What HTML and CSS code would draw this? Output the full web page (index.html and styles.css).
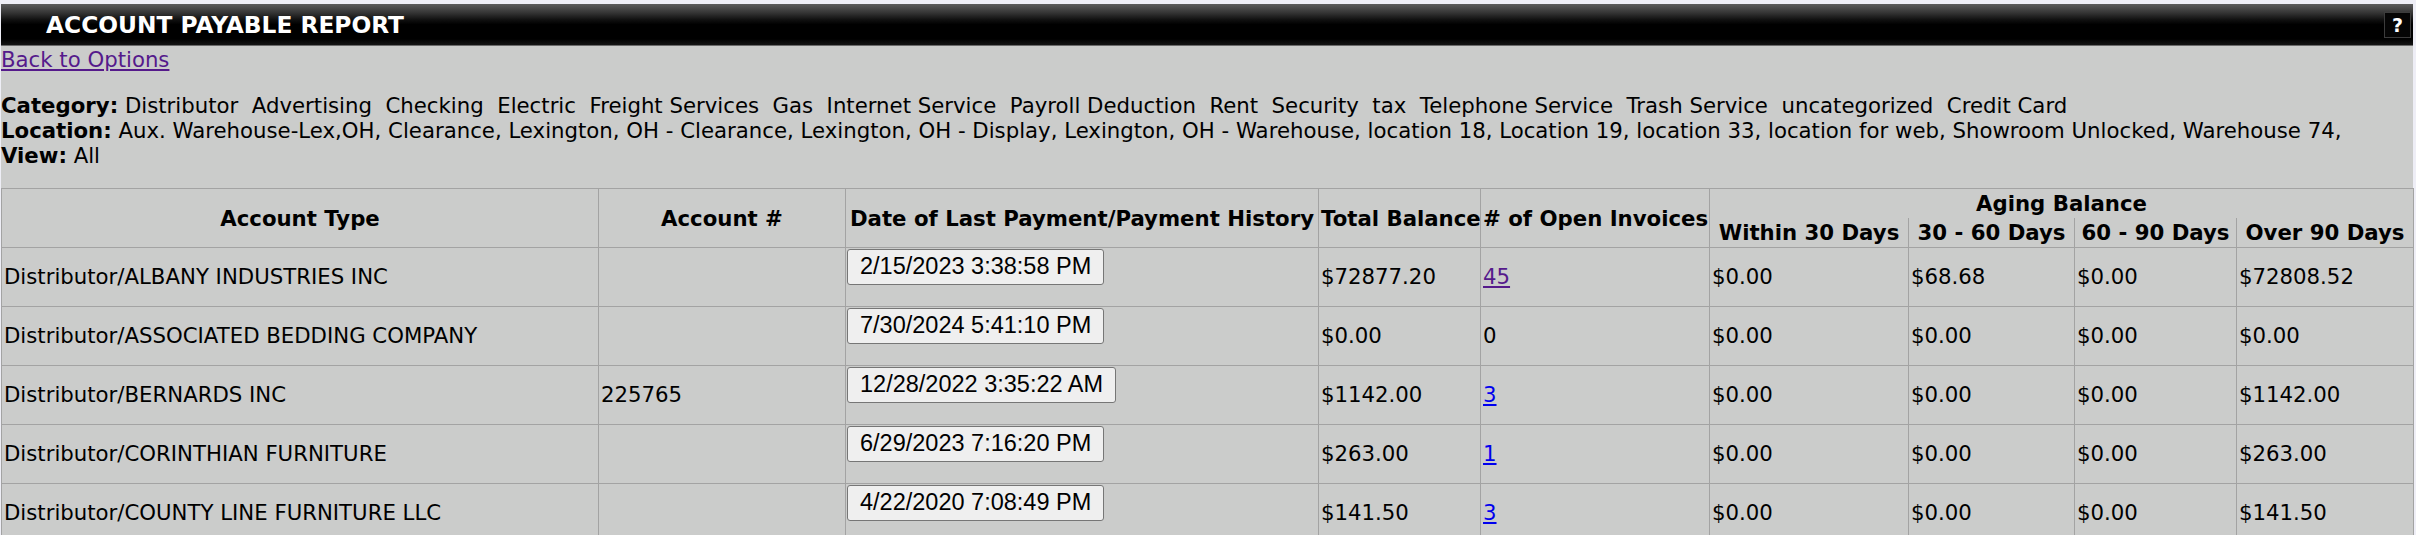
FILE: index.html
```html
<!DOCTYPE html>
<html>
<head>
<meta charset="utf-8">
<title>Account Payable Report</title>
<link rel="stylesheet" href="styles.css">
</head>
<body>
<div class="page">
  <div class="titlebar">
    <span class="title">ACCOUNT PAYABLE REPORT</span>
    <span class="help">?</span>
  </div>
  <a class="back visited" href="#">Back to Options</a>
  <div class="filters">
    <div><b>Category:</b> Distributor&nbsp; Advertising&nbsp; Checking&nbsp; Electric&nbsp; Freight Services&nbsp; Gas&nbsp; Internet Service&nbsp; Payroll Deduction&nbsp; Rent&nbsp; Security&nbsp; tax&nbsp; Telephone Service&nbsp; Trash Service&nbsp; uncategorized&nbsp; Credit Card</div>
    <div><b>Location:</b> Aux. Warehouse-Lex,OH, Clearance, Lexington, OH - Clearance, Lexington, OH - Display, Lexington, OH - Warehouse, location 18, Location 19, location 33, location for web, Showroom Unlocked, Warehouse 74,</div>
    <div><b>View:</b> All</div>
  </div>
  <table class="report">
    <colgroup>
      <col class="c-type"><col class="c-acct"><col class="c-date"><col class="c-total"><col class="c-open">
      <col class="c-w30"><col class="c-3060"><col class="c-6090"><col class="c-90">
    </colgroup>
    <thead>
      <tr>
        <th rowspan="2">Account Type</th>
        <th rowspan="2">Account #</th>
        <th rowspan="2">Date of Last Payment/Payment History</th>
        <th rowspan="2">Total Balance</th>
        <th rowspan="2"># of Open Invoices</th>
        <th colspan="4" class="aging">Aging Balance</th>
      </tr>
      <tr>
        <th class="sub">Within 30 Days</th>
        <th class="sub">30 - 60 Days</th>
        <th class="sub">60 - 90 Days</th>
        <th class="sub">Over 90 Days</th>
      </tr>
    </thead>
    <tbody>
      <tr>
        <td>Distributor/ALBANY INDUSTRIES INC</td>
        <td></td>
        <td class="date"><button class="pay">2/15/2023 3:38:58 PM</button></td>
        <td>$72877.20</td>
        <td><a class="visited" href="#">45</a></td>
        <td>$0.00</td><td>$68.68</td><td>$0.00</td><td>$72808.52</td>
      </tr>
      <tr>
        <td>Distributor/ASSOCIATED BEDDING COMPANY</td>
        <td></td>
        <td class="date"><button class="pay">7/30/2024 5:41:10 PM</button></td>
        <td>$0.00</td>
        <td>0</td>
        <td>$0.00</td><td>$0.00</td><td>$0.00</td><td>$0.00</td>
      </tr>
      <tr>
        <td>Distributor/BERNARDS INC</td>
        <td>225765</td>
        <td class="date"><button class="pay">12/28/2022 3:35:22 AM</button></td>
        <td>$1142.00</td>
        <td><a class="link" href="#">3</a></td>
        <td>$0.00</td><td>$0.00</td><td>$0.00</td><td>$1142.00</td>
      </tr>
      <tr>
        <td>Distributor/CORINTHIAN FURNITURE</td>
        <td></td>
        <td class="date"><button class="pay">6/29/2023 7:16:20 PM</button></td>
        <td>$263.00</td>
        <td><a class="link" href="#">1</a></td>
        <td>$0.00</td><td>$0.00</td><td>$0.00</td><td>$263.00</td>
      </tr>
      <tr>
        <td>Distributor/COUNTY LINE FURNITURE LLC</td>
        <td></td>
        <td class="date"><button class="pay">4/22/2020 7:08:49 PM</button></td>
        <td>$141.50</td>
        <td><a class="link" href="#">3</a></td>
        <td>$0.00</td><td>$0.00</td><td>$0.00</td><td>$141.50</td>
      </tr>
    </tbody>
  </table>
</div>
</body>
</html>
```

FILE: styles.css
```css
html, body {
  margin: 0;
  padding: 0;
  background: #eeeef6;
}
body {
  padding: 4px 3px 0 1px;
  font-family: "DejaVu Sans", Verdana, sans-serif;
  font-size: 21.25px;
  color: #000;
}
.page {
  background: #cbcccb;
  min-height: 531px;
}
.titlebar {
  height: 41px;
  display: flex;
  align-items: center;
  justify-content: space-between;
  background: linear-gradient(to bottom, #5c5c5c 0%, #333 22%, #111 38%, #000 50%, #000 85%, #141414 100%);
  border-bottom: 1px solid #6a6a6a;
  padding: 0 2px 0 45px;
}
.title {
  color: #fff;
  font-weight: bold;
  font-size: 23.3px;
}
.help {
  width: 25px;
  height: 24px;
  border: 1px solid #3c3c3c;
  background: #050505;
  color: #fff;
  font-weight: bold;
  font-size: 19px;
  display: flex;
  align-items: center;
  justify-content: center;
}
.back {
  display: block;
  width: max-content;
  line-height: 25px;
  margin-top: 1px;
}
a.visited { color: #551a8b; }
a.link { color: #0000ee; }
.filters {
  margin-top: 21px;
  line-height: 25px;
}
.report {
  margin-top: 20px;
  border-collapse: collapse;
  table-layout: fixed;
  width: 2412px;
  border: 1px solid #a3a3a3;
}
.c-type { width: 597px; }
.c-acct { width: 247px; }
.c-date { width: 473px; }
.c-total { width: 162px; }
.c-open { width: 229px; }
.c-w30 { width: 199px; }
.c-3060 { width: 166px; }
.c-6090 { width: 162px; }
.c-90 { width: 177px; }
.report th, .report td {
  border: 1px solid #a3a3a3;
  padding: 1px 2px;
  white-space: nowrap;
  overflow: hidden;
}
.report th {
  font-weight: bold;
  line-height: 27px;
  text-align: center;
}
.report th.aging { border-bottom-style: hidden; }
.report th.sub { border-top-style: hidden; }
.report td {
  text-align: left;
  line-height: 56px;
}
.report td.date {
  line-height: normal;
  vertical-align: top;
  padding: 1px 2px 21px 1px;
}
.pay {
  display: block;
  font-family: "Liberation Sans", Arial, sans-serif;
  font-size: 23.5px;
  color: #000;
  background: #efefef;
  border: 1px solid #767676;
  border-radius: 3px;
  padding: 3px 12px 4px;
  height: 36px;
  line-height: 27px;
  margin: 0;
}
```
